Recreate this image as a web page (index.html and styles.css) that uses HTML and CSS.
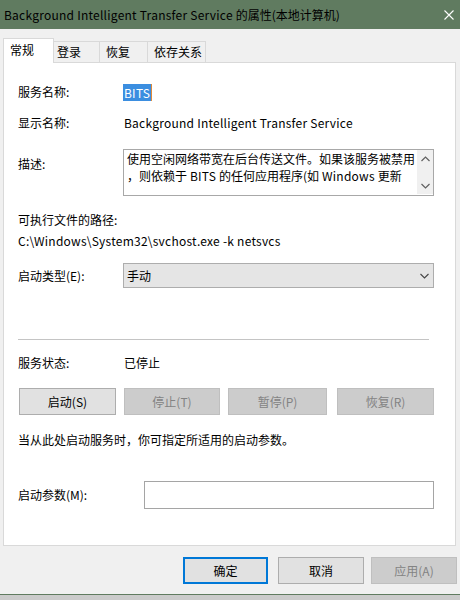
FILE: index.html
```html
<!DOCTYPE html>
<html lang="zh-CN">
<head>
<meta charset="utf-8">
<title>BITS 属性</title>
<link rel="stylesheet" href="styles.css">
</head>
<body>
<div class="window">
  <div class="titlebar">
    <span class="title"><span class="latin">Background Intelligent Transfer Service </span>的属性(本地计算机)</span>
    <svg class="close" width="10" height="10" viewBox="0 0 10 10"><path d="M0.5 0.5L9.5 9.5M9.5 0.5L0.5 9.5" stroke="#ffffff" stroke-width="1.1" fill="none"/></svg>
  </div>
  <div class="tabs">
    <div class="tab active">常规</div>
    <div class="tab t-login">登录</div>
    <div class="tab t-recover">恢复</div>
    <div class="tab t-dep">依存关系</div>
  </div>
  <div class="panel">
    <div class="row r-name">
      <span class="label">服务名称:</span>
      <span class="sel latin">BITS</span>
    </div>
    <div class="row r-display">
      <span class="label">显示名称:</span>
      <span class="value latin">Background Intelligent Transfer Service</span>
    </div>
    <div class="row r-desc">
      <span class="label desc-label">描述:</span>
      <div class="textbox">
        <div class="textbox-text">使用空闲网络带宽在后台传送文件。如果该服务被禁用<br>，则依赖于<span class="latin"> BITS </span>的任何应用程序(如<span class="latin"> Windows </span>更新</div>
        <div class="scrollbar">
          <svg width="9" height="6" viewBox="0 0 9 6"><path d="M0.5 5L4.5 1L8.5 5" stroke="#606060" stroke-width="1.2" fill="none"/></svg>
          <svg width="9" height="6" viewBox="0 0 9 6"><path d="M0.5 1L4.5 5L8.5 1" stroke="#606060" stroke-width="1.2" fill="none"/></svg>
        </div>
      </div>
    </div>
    <div class="row r-exe"><span>可执行文件的路径:</span></div>
    <div class="row r-path"><span class="latin">C:\Windows\System32\svchost.exe -k netsvcs</span></div>
    <div class="row r-type">
      <span class="label">启动类型(E):</span>
      <div class="combo">
        <span>手动</span>
        <svg width="9" height="6" viewBox="0 0 9 6"><path d="M0.5 1L4.5 5L8.5 1" stroke="#444444" stroke-width="1.1" fill="none"/></svg>
      </div>
    </div>
    <div class="separator"></div>
    <div class="row r-status">
      <span class="label">服务状态:</span>
      <span class="value">已停止</span>
    </div>
    <div class="btnrow">
      <div class="btn b-start">启动(S)</div>
      <div class="btn disabled b-stop">停止(T)</div>
      <div class="btn disabled b-pause">暂停(P)</div>
      <div class="btn disabled b-resume">恢复(R)</div>
    </div>
    <div class="row r-hint"><span>当从此处启动服务时，你可指定所适用的启动参数。</span></div>
    <div class="row r-params">
      <span class="label params-label">启动参数(M):</span>
      <div class="input"></div>
    </div>
  </div>
  <div class="actions">
    <div class="btn default b-ok">确定</div>
    <div class="btn b-cancel">取消</div>
    <div class="btn disabled b-apply">应用(A)</div>
  </div>
  <div class="frame-bottom"></div>
</div>
</body>
</html>
```
FILE: styles.css
```css
* { box-sizing: border-box; }
html, body {
  margin: 0;
  padding: 0;
}
body {
  width: 460px;
  height: 600px;
  overflow: hidden;
  background: #f0f0f0;
  font-family: "Noto Sans CJK SC", "Microsoft YaHei", sans-serif;
  font-size: 12px;
  color: #000;
}
.latin { letter-spacing: 0.24px; }
.window {
  width: 460px;
  height: 600px;
  display: flex;
  flex-direction: column;
}
.titlebar {
  height: 29px;
  flex: 0 0 29px;
  background: #607b60;
  display: flex;
  align-items: center;
  justify-content: space-between;
  padding-left: 4px;
  padding-right: 6px;
}
.title {
  color: #000;
  font-size: 12px;
  line-height: 16px;
  white-space: nowrap;
}
.close { display: block; }

.tabs {
  margin-top: 9px;
  margin-left: 3px;
  height: 25px;
  display: flex;
  align-items: flex-start;
  margin-bottom: -1px;
  position: relative;
  z-index: 1;
}
.tab {
  height: 21px;
  margin-top: 3px;
  border-top: 1px solid #d9d9d9;
  border-right: 1px solid #d9d9d9;
  background: #f0f0f0;
  line-height: 18px;
  padding-top: 1px;
  padding-left: 6px;
  white-space: nowrap;
}
.tab.active {
  height: 25px;
  margin-top: 0;
  width: 51px;
  background: #fff;
  border-left: 1px solid #d9d9d9;
  padding-top: 2px;
  padding-left: 6px;
}
.t-login { width: 46px; padding-left: 3px; }
.t-recover { width: 48px; }
.t-dep { width: 58px; }

.panel {
  margin-left: 3px;
  width: 453px;
  height: 484px;
  flex: 0 0 484px;
  background: #fff;
  border: 1px solid #d9d9d9;
  padding-left: 14px;
}
.row {
  display: flex;
  align-items: center;
  height: 18px;
  line-height: 18px;
  white-space: nowrap;
}
.label {
  flex: 0 0 105px;
  width: 105px;
}
.sel {
  display: inline-block;
  height: 17px;
  line-height: 17px;
  padding: 0 1px 0 1px;
  background: #3b8ee0;
  color: #fff;
  border-right: 1px solid #e08a3a;
}
.value { padding-left: 1px; }

.r-name { margin-top: 20px; }
.r-display { margin-top: 13px; }
.r-desc {
  margin-top: 17px;
  height: 47px;
  align-items: flex-start;
}
.desc-label { padding-top: 6px; }
.textbox {
  width: 311px;
  height: 47px;
  border: 1px solid #a8a8a8;
  display: flex;
  overflow: hidden;
}
.textbox-text {
  flex: 1 1 auto;
  padding-left: 3px;
  line-height: 17px;
  overflow: hidden;
  white-space: nowrap;
}
.scrollbar {
  flex: 0 0 16px;
  width: 16px;
  height: 44px;
  background: #f0f0f0;
  display: flex;
  flex-direction: column;
  align-items: center;
  justify-content: space-between;
  padding: 6px 0 5px;
}
.scrollbar svg { display: block; }

.r-exe { margin-top: 15px; }
.r-path { margin-top: 3px; }
.r-type { margin-top: 13px; height: 25px; }
.combo {
  width: 311px;
  height: 25px;
  background: #e5e5e5;
  border: 1px solid #adadad;
  display: flex;
  align-items: center;
  justify-content: space-between;
  padding-left: 3px;
  padding-right: 4px;
}
.separator {
  margin-top: 51px;
  width: 411px;
  height: 1px;
  background: #c4c4c4;
}
.r-status { margin-top: 14px; }

.btnrow {
  margin-top: 16px;
  padding-left: 1px;
  display: flex;
  gap: 8px;
}
.btn {
  height: 27px;
  border: 1px solid #adadad;
  background: #e1e1e1;
  display: flex;
  align-items: center;
  justify-content: center;
  white-space: nowrap;
}
.btn.disabled {
  background: #cccccc;
  border-color: #bfbfbf;
  color: #838383;
}
.b-start { width: 97px; }
.b-stop { width: 96px; }
.b-pause { width: 99px; }
.b-resume { width: 97px; margin-left: 2px; }

.r-hint { margin-top: 16px; }
.r-params { margin-top: 32px; height: 28px; }
.params-label { flex: 0 0 126px; width: 126px; }
.input {
  width: 290px;
  height: 28px;
  border: 1px solid #a5a5a5;
  background: #fff;
}

.actions {
  margin-top: 11px;
  display: flex;
  justify-content: flex-end;
  padding-right: 3px;
}
.actions .btn { height: 27px; }
.b-ok {
  width: 85px;
  border: 2px solid #0078d7;
}
.b-cancel { width: 86px; margin-left: 10px; }
.b-apply { width: 86px; margin-left: 7px; }

.frame-bottom {
  margin-top: 10px;
  flex: 1 1 auto;
  border-top: 1px solid #607b60;
  background: #cbcbcb;
}
```
